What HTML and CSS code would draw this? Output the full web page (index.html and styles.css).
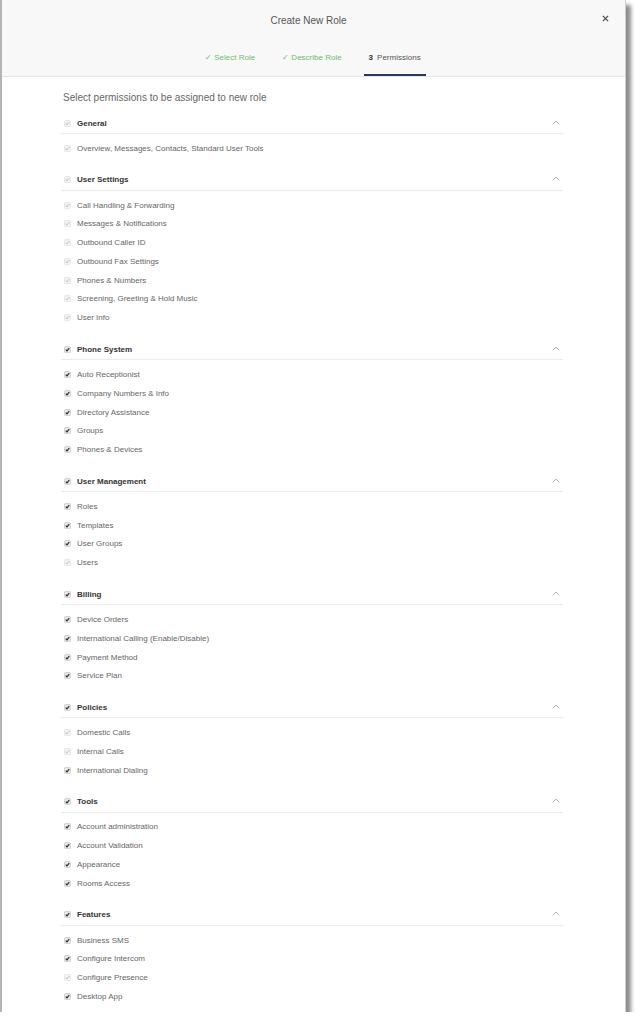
FILE: index.html
```html
<!DOCTYPE html>
<html lang="en">
<head>
<meta charset="utf-8">
<title>Create New Role</title>
<link rel="stylesheet" href="styles.css">
</head>
<body>
<div class="modal">
  <div class="header">
    <div class="title-row">
      <span></span>
      <h1 class="title">Create New Role</h1>
      <span class="close"><svg viewBox="0 0 8 8" width="7" height="7"><path d="M1 1L7 7M7 1L1 7"/></svg></span>
    </div>
    <div class="tabs">
      <div class="tab done">✓ Select Role</div>
      <div class="tab done">✓ Describe Role</div>
      <div class="tab active"><b>3</b> Permissions</div>
    </div>
  </div>

  <div class="content">
    <p class="intro">Select permissions to be assigned to new role</p>

    <div class="section">
      <div class="sec-head"><svg class="cb off" viewBox="0 0 8 8"><rect x=".5" y=".5" width="7" height="7" rx="1.5"/><path d="M2 4.2l1.4 1.4L6 2.4"/></svg><span class="sec-name">General</span><svg class="chev" viewBox="0 0 8 5"><path d="M.8 4.3L4 1.1l3.2 3.2"/></svg></div>
      <ul class="items">
        <li><svg class="cb off" viewBox="0 0 8 8"><rect x=".5" y=".5" width="7" height="7" rx="1.5"/><path d="M2 4.2l1.4 1.4L6 2.4"/></svg>Overview, Messages, Contacts, Standard User Tools</li>
      </ul>
    </div>

    <div class="section">
      <div class="sec-head"><svg class="cb off" viewBox="0 0 8 8"><rect x=".5" y=".5" width="7" height="7" rx="1.5"/><path d="M2 4.2l1.4 1.4L6 2.4"/></svg><span class="sec-name">User Settings</span><svg class="chev" viewBox="0 0 8 5"><path d="M.8 4.3L4 1.1l3.2 3.2"/></svg></div>
      <ul class="items">
        <li><svg class="cb off" viewBox="0 0 8 8"><rect x=".5" y=".5" width="7" height="7" rx="1.5"/><path d="M2 4.2l1.4 1.4L6 2.4"/></svg>Call Handling &amp; Forwarding</li>
        <li><svg class="cb off" viewBox="0 0 8 8"><rect x=".5" y=".5" width="7" height="7" rx="1.5"/><path d="M2 4.2l1.4 1.4L6 2.4"/></svg>Messages &amp; Notifications</li>
        <li><svg class="cb off" viewBox="0 0 8 8"><rect x=".5" y=".5" width="7" height="7" rx="1.5"/><path d="M2 4.2l1.4 1.4L6 2.4"/></svg>Outbound Caller ID</li>
        <li><svg class="cb off" viewBox="0 0 8 8"><rect x=".5" y=".5" width="7" height="7" rx="1.5"/><path d="M2 4.2l1.4 1.4L6 2.4"/></svg>Outbound Fax Settings</li>
        <li><svg class="cb off" viewBox="0 0 8 8"><rect x=".5" y=".5" width="7" height="7" rx="1.5"/><path d="M2 4.2l1.4 1.4L6 2.4"/></svg>Phones &amp; Numbers</li>
        <li><svg class="cb off" viewBox="0 0 8 8"><rect x=".5" y=".5" width="7" height="7" rx="1.5"/><path d="M2 4.2l1.4 1.4L6 2.4"/></svg>Screening, Greeting &amp; Hold Music</li>
        <li><svg class="cb off" viewBox="0 0 8 8"><rect x=".5" y=".5" width="7" height="7" rx="1.5"/><path d="M2 4.2l1.4 1.4L6 2.4"/></svg>User Info</li>
      </ul>
    </div>

    <div class="section">
      <div class="sec-head"><svg class="cb" viewBox="0 0 8 8"><rect x=".5" y=".5" width="7" height="7" rx="1.5"/><path d="M2 4.2l1.4 1.4L6 2.4"/></svg><span class="sec-name">Phone System</span><svg class="chev" viewBox="0 0 8 5"><path d="M.8 4.3L4 1.1l3.2 3.2"/></svg></div>
      <ul class="items">
        <li><svg class="cb" viewBox="0 0 8 8"><rect x=".5" y=".5" width="7" height="7" rx="1.5"/><path d="M2 4.2l1.4 1.4L6 2.4"/></svg>Auto Receptionist</li>
        <li><svg class="cb" viewBox="0 0 8 8"><rect x=".5" y=".5" width="7" height="7" rx="1.5"/><path d="M2 4.2l1.4 1.4L6 2.4"/></svg>Company Numbers &amp; Info</li>
        <li><svg class="cb" viewBox="0 0 8 8"><rect x=".5" y=".5" width="7" height="7" rx="1.5"/><path d="M2 4.2l1.4 1.4L6 2.4"/></svg>Directory Assistance</li>
        <li><svg class="cb" viewBox="0 0 8 8"><rect x=".5" y=".5" width="7" height="7" rx="1.5"/><path d="M2 4.2l1.4 1.4L6 2.4"/></svg>Groups</li>
        <li><svg class="cb" viewBox="0 0 8 8"><rect x=".5" y=".5" width="7" height="7" rx="1.5"/><path d="M2 4.2l1.4 1.4L6 2.4"/></svg>Phones &amp; Devices</li>
      </ul>
    </div>

    <div class="section">
      <div class="sec-head"><svg class="cb" viewBox="0 0 8 8"><rect x=".5" y=".5" width="7" height="7" rx="1.5"/><path d="M2 4.2l1.4 1.4L6 2.4"/></svg><span class="sec-name">User Management</span><svg class="chev" viewBox="0 0 8 5"><path d="M.8 4.3L4 1.1l3.2 3.2"/></svg></div>
      <ul class="items">
        <li><svg class="cb" viewBox="0 0 8 8"><rect x=".5" y=".5" width="7" height="7" rx="1.5"/><path d="M2 4.2l1.4 1.4L6 2.4"/></svg>Roles</li>
        <li><svg class="cb" viewBox="0 0 8 8"><rect x=".5" y=".5" width="7" height="7" rx="1.5"/><path d="M2 4.2l1.4 1.4L6 2.4"/></svg>Templates</li>
        <li><svg class="cb" viewBox="0 0 8 8"><rect x=".5" y=".5" width="7" height="7" rx="1.5"/><path d="M2 4.2l1.4 1.4L6 2.4"/></svg>User Groups</li>
        <li><svg class="cb off" viewBox="0 0 8 8"><rect x=".5" y=".5" width="7" height="7" rx="1.5"/><path d="M2 4.2l1.4 1.4L6 2.4"/></svg>Users</li>
      </ul>
    </div>

    <div class="section">
      <div class="sec-head"><svg class="cb" viewBox="0 0 8 8"><rect x=".5" y=".5" width="7" height="7" rx="1.5"/><path d="M2 4.2l1.4 1.4L6 2.4"/></svg><span class="sec-name">Billing</span><svg class="chev" viewBox="0 0 8 5"><path d="M.8 4.3L4 1.1l3.2 3.2"/></svg></div>
      <ul class="items">
        <li><svg class="cb" viewBox="0 0 8 8"><rect x=".5" y=".5" width="7" height="7" rx="1.5"/><path d="M2 4.2l1.4 1.4L6 2.4"/></svg>Device Orders</li>
        <li><svg class="cb" viewBox="0 0 8 8"><rect x=".5" y=".5" width="7" height="7" rx="1.5"/><path d="M2 4.2l1.4 1.4L6 2.4"/></svg>International Calling (Enable/Disable)</li>
        <li><svg class="cb" viewBox="0 0 8 8"><rect x=".5" y=".5" width="7" height="7" rx="1.5"/><path d="M2 4.2l1.4 1.4L6 2.4"/></svg>Payment Method</li>
        <li><svg class="cb" viewBox="0 0 8 8"><rect x=".5" y=".5" width="7" height="7" rx="1.5"/><path d="M2 4.2l1.4 1.4L6 2.4"/></svg>Service Plan</li>
      </ul>
    </div>

    <div class="section">
      <div class="sec-head"><svg class="cb" viewBox="0 0 8 8"><rect x=".5" y=".5" width="7" height="7" rx="1.5"/><path d="M2 4.2l1.4 1.4L6 2.4"/></svg><span class="sec-name">Policies</span><svg class="chev" viewBox="0 0 8 5"><path d="M.8 4.3L4 1.1l3.2 3.2"/></svg></div>
      <ul class="items">
        <li><svg class="cb off" viewBox="0 0 8 8"><rect x=".5" y=".5" width="7" height="7" rx="1.5"/><path d="M2 4.2l1.4 1.4L6 2.4"/></svg>Domestic Calls</li>
        <li><svg class="cb off" viewBox="0 0 8 8"><rect x=".5" y=".5" width="7" height="7" rx="1.5"/><path d="M2 4.2l1.4 1.4L6 2.4"/></svg>Internal Calls</li>
        <li><svg class="cb" viewBox="0 0 8 8"><rect x=".5" y=".5" width="7" height="7" rx="1.5"/><path d="M2 4.2l1.4 1.4L6 2.4"/></svg>International Dialing</li>
      </ul>
    </div>

    <div class="section">
      <div class="sec-head"><svg class="cb" viewBox="0 0 8 8"><rect x=".5" y=".5" width="7" height="7" rx="1.5"/><path d="M2 4.2l1.4 1.4L6 2.4"/></svg><span class="sec-name">Tools</span><svg class="chev" viewBox="0 0 8 5"><path d="M.8 4.3L4 1.1l3.2 3.2"/></svg></div>
      <ul class="items">
        <li><svg class="cb" viewBox="0 0 8 8"><rect x=".5" y=".5" width="7" height="7" rx="1.5"/><path d="M2 4.2l1.4 1.4L6 2.4"/></svg>Account administration</li>
        <li><svg class="cb" viewBox="0 0 8 8"><rect x=".5" y=".5" width="7" height="7" rx="1.5"/><path d="M2 4.2l1.4 1.4L6 2.4"/></svg>Account Validation</li>
        <li><svg class="cb" viewBox="0 0 8 8"><rect x=".5" y=".5" width="7" height="7" rx="1.5"/><path d="M2 4.2l1.4 1.4L6 2.4"/></svg>Appearance</li>
        <li><svg class="cb" viewBox="0 0 8 8"><rect x=".5" y=".5" width="7" height="7" rx="1.5"/><path d="M2 4.2l1.4 1.4L6 2.4"/></svg>Rooms Access</li>
      </ul>
    </div>

    <div class="section">
      <div class="sec-head"><svg class="cb" viewBox="0 0 8 8"><rect x=".5" y=".5" width="7" height="7" rx="1.5"/><path d="M2 4.2l1.4 1.4L6 2.4"/></svg><span class="sec-name">Features</span><svg class="chev" viewBox="0 0 8 5"><path d="M.8 4.3L4 1.1l3.2 3.2"/></svg></div>
      <ul class="items">
        <li><svg class="cb" viewBox="0 0 8 8"><rect x=".5" y=".5" width="7" height="7" rx="1.5"/><path d="M2 4.2l1.4 1.4L6 2.4"/></svg>Business SMS</li>
        <li><svg class="cb" viewBox="0 0 8 8"><rect x=".5" y=".5" width="7" height="7" rx="1.5"/><path d="M2 4.2l1.4 1.4L6 2.4"/></svg>Configure Intercom</li>
        <li><svg class="cb off" viewBox="0 0 8 8"><rect x=".5" y=".5" width="7" height="7" rx="1.5"/><path d="M2 4.2l1.4 1.4L6 2.4"/></svg>Configure Presence</li>
        <li><svg class="cb" viewBox="0 0 8 8"><rect x=".5" y=".5" width="7" height="7" rx="1.5"/><path d="M2 4.2l1.4 1.4L6 2.4"/></svg>Desktop App</li>
      </ul>
    </div>
  </div>
</div>
</body>
</html>
```

FILE: styles.css
```css
* { box-sizing: border-box; }

html, body {
  margin: 0;
  padding: 0;
  background: #ffffff;
}

body {
  font-family: "Liberation Sans", Arial, Helvetica, sans-serif;
  color: #666;
}

.modal {
  width: 626px;
  height: 1012px;
  overflow: hidden;
  background: #ffffff;
  border-left: 2px solid #b4b4b4;
  border-right: 1px solid #d0d0d0;
  box-shadow: 5px 5px 4px rgba(0, 0, 0, 0.45);
}

/* ---------- header ---------- */
.header {
  height: 77px;
  background: #f8f8f8;
  border-bottom: 1px solid #e4e4e4;
  display: flex;
  flex-direction: column;
}

.title-row {
  height: 40px;
  display: grid;
  grid-template-columns: 1fr auto 1fr;
  align-items: center;
  padding: 1px 10px 0 0;
}

.title {
  margin: 0;
  font-size: 10px;
  font-weight: normal;
  color: #555;
  line-height: 12px;
}

.close {
  justify-self: end;
  margin-right: 6px;
  width: 7px;
  height: 7px;
  display: flex;
  margin-top: -5px;
}

.close svg path {
  stroke: #444;
  stroke-width: 1.3;
  fill: none;
}

.tabs {
  height: 36px;
  display: flex;
  align-items: stretch;
  gap: 17px;
  padding-left: 198px;
}

.tab {
  display: flex;
  align-items: center;
  padding: 0 5px;
  font-size: 8px;
  color: #555;
  border-bottom: 2px solid transparent;
  padding-top: 0;
}

.tab.done {
  color: #72b872;
}

.tab.active {
  border-bottom-color: #2d3766;
  color: #555;
}

.tab.active b {
  color: #333;
  margin-right: 4px;
}

/* ---------- content ---------- */
.content {
  width: 502px;
  margin-left: 59px;
}

.intro {
  margin: 14px 0 9px 2px;
  font-size: 10px;
  line-height: 14px;
  color: #666;
}

.section {
  margin-bottom: 13.1px;
}

.sec-head {
  height: 20px;
  display: flex;
  align-items: center;
  padding: 0 3px 1px 3px;
  border-bottom: 1px solid #ececec;
}

.sec-name {
  flex: 1;
  font-size: 8px;
  font-weight: bold;
  color: #333;
}

.chev {
  width: 8px;
  height: 5px;
  margin-bottom: 2px;
}

.chev path {
  fill: none;
  stroke: #aaa;
  stroke-width: 1;
}

.items {
  list-style: none;
  margin: 0;
  padding: 5px 0 0 0;
}

.items li {
  height: 18.75px;
  display: flex;
  align-items: center;
  padding-left: 3px;
  font-size: 8px;
  color: #666;
  white-space: nowrap;
}

.cb {
  width: 7px;
  height: 7px;
  flex: none;
  margin-right: 6px;
}

.cb rect {
  fill: #e6e6e6;
  stroke: #c4c4c4;
  stroke-width: 0.8;
}

.cb path {
  fill: none;
  stroke: #2a2a2a;
  stroke-width: 1.3;
}

.cb.off rect {
  fill: #f3f3f3;
  stroke: #dcdcdc;
}

.cb.off path {
  stroke: #b5b5b5;
  stroke-width: 1;
}
```
